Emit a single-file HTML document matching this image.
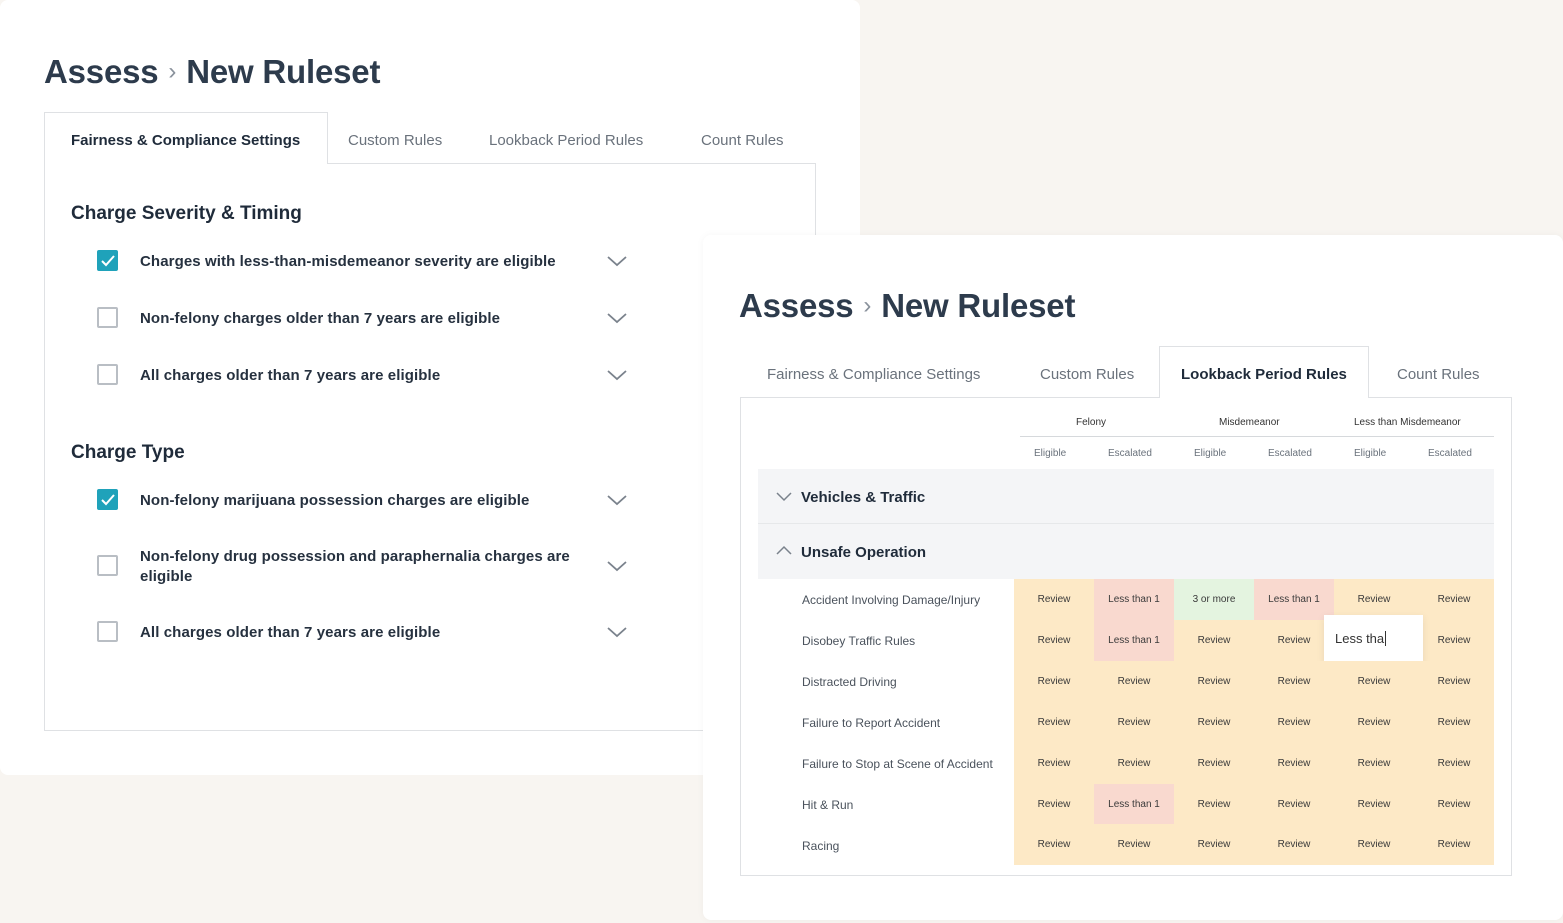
<!DOCTYPE html>
<html><head><style>
*{box-sizing:border-box;margin:0;padding:0}
body{width:1563px;height:923px;background:#f8f5f1;font-family:"Liberation Sans",sans-serif;position:relative;overflow:hidden;color:#1f2b3a}
.card{position:absolute;background:#fff;border-radius:8px}
h1{position:absolute;font-size:33px;font-weight:bold;color:#2d3b4c;letter-spacing:-0.2px}
h1 span{font-weight:normal;color:#8a929c;font-size:24px;margin:0 10px;position:relative;top:-4px}
.tab{position:absolute;font-size:15px;color:#6a727c}
.tab.act{color:#1f2b3a;font-weight:bold}
.sec{position:absolute;font-size:19px;color:#1f2b3a;font-weight:bold}
.item{position:absolute;font-size:15px;font-weight:bold;color:#26313f;line-height:20px;letter-spacing:0.1px}
.cb{position:absolute;width:21px;height:21px;border:2px solid #b9bec4;border-radius:2px;background:#fff}
.cb.on{background:#1fa2ba;border-color:#1fa2ba}
.chev{position:absolute}
.cell{position:absolute;width:80px;height:41px;font-size:10px;display:flex;align-items:center;justify-content:center;color:#3a3a3a;background:#fde9c6}
.r{background:#f9d9cf}.g{background:#e4f4e0}
.rl{position:absolute;left:802px;font-size:12px;color:#4a525c}
.sh{position:absolute;font-size:10px;color:#6a727c}
</style></head><body>
<div class="card" style="left:0;top:0;width:860px;height:775px"></div>
<h1 style="left:44px;top:53px">Assess<span>›</span>New Ruleset</h1>
<div style="position:absolute;left:44px;top:163px;width:772px;height:568px;border:1px solid #dfe1e4;border-top:none"></div>
<div style="position:absolute;left:327px;top:163px;width:489px;border-top:1px solid #dfe1e4"></div>
<div style="position:absolute;left:44px;top:112px;width:284px;height:52px;border:1px solid #dfe1e4;border-bottom:none;background:#fff"></div>
<div class="tab act" style="left:71px;top:132px">Fairness &amp; Compliance Settings</div>
<div class="tab" style="left:348px;top:132px">Custom Rules</div>
<div class="tab" style="left:489px;top:132px">Lookback Period Rules</div>
<div class="tab" style="left:701px;top:132px">Count Rules</div>
<div class="sec" style="left:71px;top:203px">Charge Severity &amp; Timing</div>
<div class="sec" style="left:71px;top:442px">Charge Type</div>

<div class="cb on" style="left:97px;top:250px"><svg width="17" height="17" viewBox="0 0 17 17"><path d="M3 9l4 4 8-9" stroke="#fff" stroke-width="2" fill="none"/></svg></div>
<div class="item" style="left:140px;top:252px">Charges with less-than-misdemeanor severity are eligible</div>
<div class="cb" style="left:97px;top:307px"></div>
<div class="item" style="left:140px;top:309px">Non-felony charges older than 7 years are eligible</div>
<div class="cb" style="left:97px;top:364px"></div>
<div class="item" style="left:140px;top:366px">All charges older than 7 years are eligible</div>
<div class="cb on" style="left:97px;top:489px"><svg width="17" height="17" viewBox="0 0 17 17"><path d="M3 9l4 4 8-9" stroke="#fff" stroke-width="2" fill="none"/></svg></div>
<div class="item" style="left:140px;top:491px">Non-felony marijuana possession charges are eligible</div>
<div class="cb" style="left:97px;top:555px"></div>
<div class="item" style="left:140px;top:547px">Non-felony drug possession and paraphernalia charges are<br>eligible</div>
<div class="cb" style="left:97px;top:621px"></div>
<div class="item" style="left:140px;top:623px">All charges older than 7 years are eligible</div>
<svg class="chev" style="left:606px;top:254px" width="22" height="14"><path d="M2 3l9 8 9-8" stroke="#7a828c" stroke-width="1.8" fill="none"/></svg>
<svg class="chev" style="left:606px;top:311px" width="22" height="14"><path d="M2 3l9 8 9-8" stroke="#7a828c" stroke-width="1.8" fill="none"/></svg>
<svg class="chev" style="left:606px;top:368px" width="22" height="14"><path d="M2 3l9 8 9-8" stroke="#7a828c" stroke-width="1.8" fill="none"/></svg>
<svg class="chev" style="left:606px;top:493px" width="22" height="14"><path d="M2 3l9 8 9-8" stroke="#7a828c" stroke-width="1.8" fill="none"/></svg>
<svg class="chev" style="left:606px;top:559px" width="22" height="14"><path d="M2 3l9 8 9-8" stroke="#7a828c" stroke-width="1.8" fill="none"/></svg>
<svg class="chev" style="left:606px;top:625px" width="22" height="14"><path d="M2 3l9 8 9-8" stroke="#7a828c" stroke-width="1.8" fill="none"/></svg>

<div class="card" style="left:703px;top:235px;width:860px;height:685px;box-shadow:0 0 8px rgba(0,0,0,0.04)"></div>
<h1 style="left:739px;top:287px">Assess<span>›</span>New Ruleset</h1>
<div style="position:absolute;left:740px;top:397px;width:772px;height:479px;border:1px solid #dfe1e4;border-top:none"></div>
<div style="position:absolute;left:740px;top:397px;width:420px;border-top:1px solid #dfe1e4"></div>
<div style="position:absolute;left:1368px;top:397px;width:144px;border-top:1px solid #dfe1e4"></div>
<div style="position:absolute;left:1159px;top:346px;width:210px;height:52px;border:1px solid #dfe1e4;border-bottom:none;background:#fff"></div>
<div class="tab" style="left:767px;top:366px">Fairness &amp; Compliance Settings</div>
<div class="tab" style="left:1040px;top:366px">Custom Rules</div>
<div class="tab act" style="left:1181px;top:366px">Lookback Period Rules</div>
<div class="tab" style="left:1397px;top:366px">Count Rules</div>

<div class="sh" style="left:1076px;top:417px;color:#333">Felony</div>
<div class="sh" style="left:1219px;top:417px;color:#333">Misdemeanor</div>
<div class="sh" style="left:1354px;top:417px;color:#333">Less than Misdemeanor</div>
<div style="position:absolute;left:1020px;top:436px;width:474px;border-top:1.5px solid #d6d9dc"></div>
<div class="sh" style="left:1034px;top:448px">Eligible</div>
<div class="sh" style="left:1108px;top:448px">Escalated</div>
<div class="sh" style="left:1194px;top:448px">Eligible</div>
<div class="sh" style="left:1268px;top:448px">Escalated</div>
<div class="sh" style="left:1354px;top:448px">Eligible</div>
<div class="sh" style="left:1428px;top:448px">Escalated</div>

<div style="position:absolute;left:758px;top:469px;width:736px;height:110px;background:#f4f5f7"></div>
<div style="position:absolute;left:758px;top:523px;width:736px;border-top:1px solid #e6e8ea"></div>
<svg class="chev" style="left:775px;top:491px" width="18" height="12"><path d="M2 2l7 7 7-7" stroke="#7a828c" stroke-width="1.5" fill="none"/></svg>
<svg class="chev" style="left:775px;top:545px" width="18" height="12"><path d="M2 9l7-7 7 7" stroke="#7a828c" stroke-width="1.5" fill="none"/></svg>
<div class="sec" style="left:801px;top:489px;font-size:15px">Vehicles &amp; Traffic</div>
<div class="sec" style="left:801px;top:544px;font-size:15px">Unsafe Operation</div>

<div style="position:absolute;left:1014px;top:579px;width:480px;height:286px;background:#fde9c6"></div>
<div class="rl" style="top:593px">Accident Involving Damage/Injury</div>
<div class="rl" style="top:634px">Disobey Traffic Rules</div>
<div class="rl" style="top:675px">Distracted Driving</div>
<div class="rl" style="top:716px">Failure to Report Accident</div>
<div class="rl" style="top:757px">Failure to Stop at Scene of Accident</div>
<div class="rl" style="top:798px">Hit &amp; Run</div>
<div class="rl" style="top:839px">Racing</div>

<div class="cell" style="left:1014px;top:579px">Review</div><div class="cell r" style="left:1094px;top:579px">Less than 1</div><div class="cell g" style="left:1174px;top:579px">3 or more</div><div class="cell r" style="left:1254px;top:579px">Less than 1</div><div class="cell" style="left:1334px;top:579px">Review</div><div class="cell" style="left:1414px;top:579px">Review</div>
<div class="cell" style="left:1014px;top:620px">Review</div><div class="cell r" style="left:1094px;top:620px">Less than 1</div><div class="cell" style="left:1174px;top:620px">Review</div><div class="cell" style="left:1254px;top:620px">Review</div><div class="cell" style="left:1414px;top:620px">Review</div>
<div style="position:absolute;left:1324px;top:615px;width:99px;height:49px;background:#fff;box-shadow:0 2px 8px rgba(0,0,0,0.08);font-size:13px;padding:16px 0 0 11px;color:#333">Less tha<span style="border-left:1px solid #333;margin-left:1px"></span></div>
<div class="cell" style="left:1014px;top:661px">Review</div><div class="cell" style="left:1094px;top:661px">Review</div><div class="cell" style="left:1174px;top:661px">Review</div><div class="cell" style="left:1254px;top:661px">Review</div><div class="cell" style="left:1334px;top:661px">Review</div><div class="cell" style="left:1414px;top:661px">Review</div>
<div class="cell" style="left:1014px;top:702px">Review</div><div class="cell" style="left:1094px;top:702px">Review</div><div class="cell" style="left:1174px;top:702px">Review</div><div class="cell" style="left:1254px;top:702px">Review</div><div class="cell" style="left:1334px;top:702px">Review</div><div class="cell" style="left:1414px;top:702px">Review</div>
<div class="cell" style="left:1014px;top:743px">Review</div><div class="cell" style="left:1094px;top:743px">Review</div><div class="cell" style="left:1174px;top:743px">Review</div><div class="cell" style="left:1254px;top:743px">Review</div><div class="cell" style="left:1334px;top:743px">Review</div><div class="cell" style="left:1414px;top:743px">Review</div>
<div class="cell" style="left:1014px;top:784px">Review</div><div class="cell r" style="left:1094px;top:784px">Less than 1</div><div class="cell" style="left:1174px;top:784px">Review</div><div class="cell" style="left:1254px;top:784px">Review</div><div class="cell" style="left:1334px;top:784px">Review</div><div class="cell" style="left:1414px;top:784px">Review</div>
<div class="cell" style="left:1014px;top:824px">Review</div><div class="cell" style="left:1094px;top:824px">Review</div><div class="cell" style="left:1174px;top:824px">Review</div><div class="cell" style="left:1254px;top:824px">Review</div><div class="cell" style="left:1334px;top:824px">Review</div><div class="cell" style="left:1414px;top:824px">Review</div>
</body></html>
